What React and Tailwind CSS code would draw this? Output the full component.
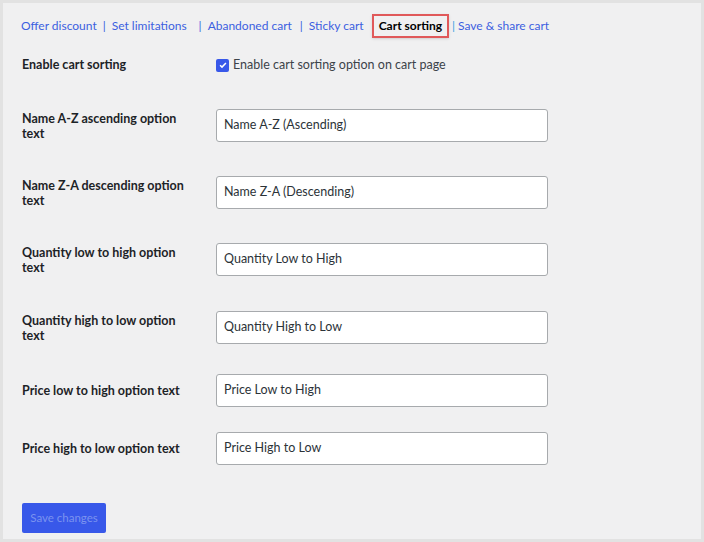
export default function App() {
  const rows = [
    ['Name A-Z ascending option text', 'Name A-Z (Ascending)', 'mt-[34px]'],
    ['Name Z-A descending option text', 'Name Z-A (Descending)', 'mt-[34px]'],
    ['Quantity low to high option text', 'Quantity Low to High', 'mt-[34px]'],
    ['Quantity high to low option text', 'Quantity High to Low', 'mt-[35px]'],
    ['Price low to high option text', 'Price Low to High', 'mt-[30px]'],
    ['Price high to low option text', 'Price High to Low', 'mt-[25px]'],
  ];
  const link = 'text-[#3c5fe0]';
  return (
    <div className="w-[704px] h-[542px] bg-[#f0f0f1] border-[3px] border-[#e2e2e2] text-[12.5px] text-[#1d2327]" style={{ fontFamily: 'Lato, "Noto Sans", sans-serif' }}>
      <div className="flex items-center pl-[18px] pt-[9px] h-[36px] text-[12px]">
        <span className={link}>Offer discount</span>
        <span className="mx-[6px] text-[#3c5fe0]">|</span>
        <span className={link}>Set limitations</span>
        <span className="ml-[12px] mr-[6px] text-[#3c5fe0]">|</span>
        <span className={link}>Abandoned cart</span>
        <span className="ml-[8px] mr-[6px] text-[#3c5fe0]">|</span>
        <span className={link}>Sticky cart</span>
        <span className="ml-[8px] border-2 border-[#e0595a] px-[5px] h-[24px] flex items-center font-bold text-black shadow-sm">Cart sorting</span>
        <span className="mx-[3px] text-[#3c9ee0]">|</span>
        <span className={link}>Save &amp; share cart</span>
      </div>
      <div className="pl-[19px] pr-[153px]">
        <div className="flex items-center mt-[16px] h-[20px]">
          <div className="w-[194px] font-bold">Enable cart sorting</div>
          <div className="flex items-center gap-[4px] text-[#3c434a]">
            <span className="w-[13px] h-[13px] rounded-[2px] bg-[#3858e9] flex items-center justify-center">
              <svg viewBox="0 0 12 12" className="w-[10px] h-[10px]"><path d="M2.5 6.2l2.3 2.3 4.7-5" stroke="white" strokeWidth="1.8" fill="none" /></svg>
            </span>
            Enable cart sorting option on cart page
          </div>
        </div>
        {rows.map(([label, value, mt]) => (
          <div key={label} className={`flex items-center ${mt}`}>
            <div className="w-[194px] pr-[30px] font-bold leading-[15px]">{label}</div>
            <div className="w-[332px] h-[33px] bg-white border border-[#a7aaad] rounded-[3px] flex items-center px-[7px] text-[#2c3338]">{value}</div>
          </div>
        ))}
        <div className="mt-[38px] w-[84px] h-[30px] bg-[#3858e9] rounded-[2px] flex items-center justify-center text-[#7b93ef] text-[11.5px]">Save changes</div>
      </div>
    </div>
  );
}
